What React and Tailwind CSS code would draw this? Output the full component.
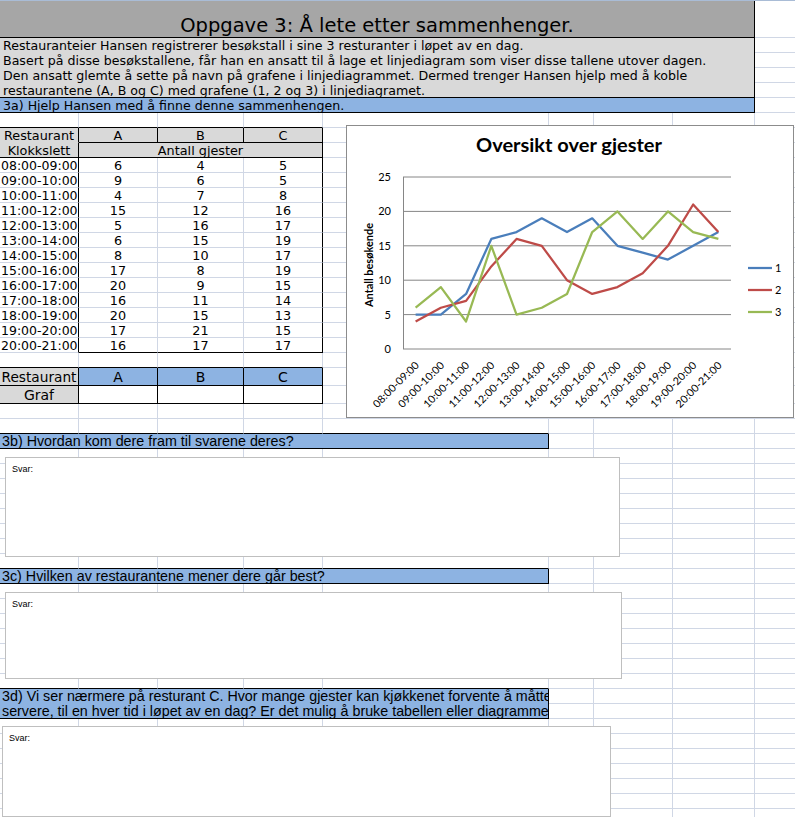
import React from 'react';
import clsx from 'clsx';

const COLS = ['w-[79px]', 'w-[79px]', 'w-[86px]', 'w-[79px]', 'w-[226px]', 'w-[45px]', 'w-[79px]', 'w-[82px]', 'w-[60px]'];

const dv = "font-['DejaVu_Sans',Verdana,sans-serif]";
const ls = "font-['Liberation_Sans',Arial,sans-serif]";

const times = ['08:00-09:00', '09:00-10:00', '10:00-11:00', '11:00-12:00', '12:00-13:00', '13:00-14:00', '14:00-15:00', '15:00-16:00', '16:00-17:00', '17:00-18:00', '18:00-19:00', '19:00-20:00', '20:00-21:00'];
const A = [6, 9, 4, 15, 5, 6, 8, 17, 20, 16, 20, 17, 16];
const B = [4, 6, 7, 12, 16, 15, 10, 8, 9, 11, 15, 21, 17];
const C = [5, 5, 8, 16, 17, 19, 17, 19, 15, 14, 13, 15, 17];

const series = [
    { name: '1', color: '#4a7ebb', data: C },
    { name: '2', color: '#be4b48', data: B },
    { name: '3', color: '#98b954', data: A },
];

// r / b: 'g' gridline, 'k' black, 'n' none
const Cell = ({ w, h = 'h-full', r = 'g', b = 'g', className, children }) => (
    <div
        className={clsx(
            'shrink-0 border-r border-b overflow-hidden whitespace-nowrap',
            w, h,
            r === 'k' ? 'border-r-black' : r === 'n' ? 'border-r-transparent' : 'border-r-[#d0d7e5]',
            b === 'k' ? 'border-b-black' : b === 'n' ? 'border-b-transparent' : 'border-b-[#d0d7e5]',
            className
        )}
    >
        {children}
    </div>
);

const Row = ({ h = 'h-[15px]', children }) => <div className={clsx('flex', h)}>{children}</div>;

const fill = (start, blackBottom = 0) =>
    COLS.slice(start).map((w, i) => <Cell key={'f' + (start + i)} w={w} b={start + i < blackBottom ? 'k' : 'g'} />);

const EmptyRow = ({ blackBottom = 0 }) => <Row>{fill(0, blackBottom)}</Row>;

const Chart = () => {
    const px = (i) => 56 + (i + 0.5) * 25.23;
    const py = (v) => 223 - v * 6.88;
    return (
        <div className="absolute left-[346px] top-[125px] w-[448px] h-[293px] border border-[#8c8c8c] bg-white">
            <svg width="446" height="291" viewBox="0 0 446 291" fontFamily="Lato, 'Open Sans', sans-serif">
                <text x="222" y="26" textAnchor="middle" fontSize="18" fontWeight="700" textLength="186" lengthAdjust="spacingAndGlyphs">
                    Oversikt over gjester
                </text>
                {[0, 5, 10, 15, 20, 25].map((v) => (
                    <g key={v}>
                        <line x1="56" x2="384" y1={py(v)} y2={py(v)} stroke="#868686" strokeWidth="1" />
                        <text x="44" y={py(v) + 4} textAnchor="end" fontSize="11" fill="#000">{v}</text>
                    </g>
                ))}
                <line x1="56.5" x2="56.5" y1="51" y2="223" stroke="#868686" strokeWidth="1" />
                <text
                    transform="translate(26 139) rotate(-90)"
                    textAnchor="middle"
                    fontSize="11"
                    fontWeight="700"
                    textLength="84"
                    lengthAdjust="spacingAndGlyphs"
                >
                    Antall besøkende
                </text>
                {times.map((t, i) => (
                    <text
                        key={t}
                        transform={`translate(${px(i) + 4} 240) rotate(-45)`}
                        textAnchor="end"
                        fontSize="10.5"
                        textLength="60"
                        lengthAdjust="spacingAndGlyphs"
                    >
                        {t}
                    </text>
                ))}
                {series.map((s) => (
                    <polyline
                        key={s.name}
                        points={s.data.map((v, i) => `${px(i)},${py(v)}`).join(' ')}
                        fill="none"
                        stroke={s.color}
                        strokeWidth="2.25"
                        strokeLinejoin="round"
                    />
                ))}
                {series.map((s, k) => (
                    <g key={'l' + s.name}>
                        <line x1="401" x2="425" y1={142 + k * 22} y2={142 + k * 22} stroke={s.color} strokeWidth="2.25" />
                        <text x="428" y={146 + k * 22} fontSize="11">{s.name}</text>
                    </g>
                ))}
            </svg>
        </div>
    );
};

const AnswerBox = ({ className }) => (
    <div className={clsx('absolute border border-[#bfbfbf] bg-white', className)}>
        <div className={clsx(ls, 'text-[9px] leading-[10px] pl-[6px] pt-[6px] text-black')}>Svar:</div>
    </div>
);

const App = () => {
    return (
        <div className="relative w-[795px] h-[817px] overflow-hidden bg-white text-black">
            <div className="h-px bg-[#a9bcd6]" />

            {/* title */}
            <Row h="h-[37px]">
                <Cell w="w-[755px]" r="k" b="k" className={clsx(dv, 'bg-[#a6a6a6] text-center text-[19.5px] leading-[22px] pt-[14px] overflow-visible')}>
                    Oppgave 3: Å lete etter sammenhenger.
                </Cell>
                {fill(8)}
            </Row>

            {/* description */}
            <div className="flex">
                <Cell w="w-[755px]" h="h-[60px]" r="k" b="k" className={clsx(dv, 'bg-[#d9d9d9] text-[12.6px] leading-[15px] pl-[3px]')}>
                    <div>Restauranteier Hansen registrerer besøkstall i sine 3 resturanter i løpet av en dag.</div>
                    <div>Basert på disse besøkstallene, får han en ansatt til å lage et linjediagram som viser disse tallene utover dagen.</div>
                    <div>Den ansatt glemte å sette på navn på grafene i linjediagrammet. Dermed trenger Hansen hjelp med å koble</div>
                    <div>restaurantene (A, B og C) med grafene (1, 2 og 3) i linjediagramet.</div>
                </Cell>
                <div className="flex flex-col">
                    {[0, 1, 2, 3].map((k) => (
                        <Row key={k}>{fill(8)}</Row>
                    ))}
                </div>
            </div>

            <Row>
                <Cell w="w-[755px]" r="k" b="k" className={clsx(dv, 'bg-[#8db3e2] text-[12.6px] leading-[15px] pl-[3px]')}>
                    3a) Hjelp Hansen med å finne denne sammenhengen.
                </Cell>
                {fill(8)}
            </Row>

            <EmptyRow blackBottom={4} />

            {/* data table */}
            <Row>
                <Cell w={COLS[0]} r="k" b="n" className={clsx(dv, 'bg-[#d9d9d9] text-[12.8px] leading-[15px] text-center')}>Restaurant</Cell>
                <Cell w={COLS[1]} r="k" b="k" className={clsx(dv, 'bg-[#d9d9d9] text-[12.8px] leading-[15px] text-center')}>A</Cell>
                <Cell w={COLS[2]} r="k" b="k" className={clsx(dv, 'bg-[#d9d9d9] text-[12.8px] leading-[15px] text-center')}>B</Cell>
                <Cell w={COLS[3]} r="k" b="k" className={clsx(dv, 'bg-[#d9d9d9] text-[12.8px] leading-[15px] text-center')}>C</Cell>
                {fill(4)}
            </Row>
            <Row>
                <Cell w={COLS[0]} r="k" b="k" className={clsx(dv, 'bg-[#d9d9d9] text-[12.8px] leading-[15px] text-center')}>Klokkslett</Cell>
                <Cell w="w-[244px]" r="k" b="k" className={clsx(dv, 'bg-[#d9d9d9] text-[12.8px] leading-[15px] text-center')}>Antall gjester</Cell>
                {fill(4)}
            </Row>
            {times.map((t, i) => {
                const last = i === times.length - 1;
                return (
                    <Row key={t}>
                        <Cell w={COLS[0]} r="k" className={clsx(dv, 'text-[12.5px] leading-[15px] pl-[1px]')}>{t}</Cell>
                        <Cell w={COLS[1]} b={last ? 'k' : 'g'} className={clsx(dv, 'text-[12.8px] leading-[15px] text-center')}>{A[i]}</Cell>
                        <Cell w={COLS[2]} b={last ? 'k' : 'g'} className={clsx(dv, 'text-[12.8px] leading-[15px] text-center')}>{B[i]}</Cell>
                        <Cell w={COLS[3]} r="k" b={last ? 'k' : 'g'} className={clsx(dv, 'text-[12.8px] leading-[15px] text-center')}>{C[i]}</Cell>
                        {fill(4)}
                    </Row>
                );
            })}

            <EmptyRow blackBottom={4} />

            {/* restaurant / graf */}
            <Row h="h-[18px]">
                <Cell w={COLS[0]} r="k" b="k" className={clsx(dv, 'bg-[#d9d9d9] text-[13.7px] leading-[18px] text-center')}>Restaurant</Cell>
                <Cell w={COLS[1]} r="k" b="k" className={clsx(dv, 'bg-[#8db3e2] text-[14px] leading-[18px] text-center')}>A</Cell>
                <Cell w={COLS[2]} r="k" b="k" className={clsx(dv, 'bg-[#8db3e2] text-[14px] leading-[18px] text-center')}>B</Cell>
                <Cell w={COLS[3]} r="k" b="k" className={clsx(dv, 'bg-[#8db3e2] text-[14px] leading-[18px] text-center')}>C</Cell>
                {fill(4)}
            </Row>
            <Row h="h-[18px]">
                <Cell w={COLS[0]} r="k" b="k" className={clsx(dv, 'bg-[#d9d9d9] text-[14px] leading-[18px] text-center')}>Graf</Cell>
                <Cell w={COLS[1]} r="k" b="k" />
                <Cell w={COLS[2]} r="k" b="k" />
                <Cell w={COLS[3]} r="k" b="k" />
                {fill(4)}
            </Row>

            <EmptyRow />
            <EmptyRow blackBottom={5} />

            {/* 3b */}
            <Row>
                <Cell w="w-[549px]" r="k" b="k" className={clsx(ls, 'bg-[#8db3e2] text-[14.3px] leading-[15px] pl-[2px]')}>
                    3b) Hvordan kom dere fram til svarene deres?
                </Cell>
                {fill(5)}
            </Row>
            {[0, 1, 2, 3, 4, 5, 6].map((k) => <EmptyRow key={'b' + k} />)}
            <EmptyRow blackBottom={5} />

            {/* 3c */}
            <Row>
                <Cell w="w-[549px]" r="k" b="k" className={clsx(ls, 'bg-[#8db3e2] text-[14.3px] leading-[15px] pl-[2px]')}>
                    3c) Hvilken av restaurantene mener dere går best?
                </Cell>
                {fill(5)}
            </Row>
            {[0, 1, 2, 3, 4, 5].map((k) => <EmptyRow key={'c' + k} />)}
            <EmptyRow blackBottom={5} />

            {/* 3d */}
            <div className="flex">
                <Cell w="w-[549px]" h="h-[30px]" r="k" b="k" className={clsx(ls, 'bg-[#8db3e2] text-[14.3px] leading-[15px] pl-[2px]')}>
                    <div>3d) Vi ser nærmere på resturant C. Hvor mange gjester kan kjøkkenet forvente å måtte</div>
                    <div>servere, til en hver tid i løpet av en dag? Er det mulig å bruke tabellen eller diagrammet?</div>
                </Cell>
                <div className="flex flex-col">
                    <Row>{fill(5)}</Row>
                    <Row>{fill(5)}</Row>
                </div>
            </div>
            {[0, 1, 2, 3, 4, 5, 6].map((k) => <EmptyRow key={'d' + k} />)}

            <Chart />
            <AnswerBox className="left-[5px] top-[457px] w-[615px] h-[100px]" />
            <AnswerBox className="left-[5px] top-[592px] w-[617px] h-[87px]" />
            <AnswerBox className="left-[2px] top-[726px] w-[609px] h-[91px]" />
        </div>
    );
};

export default App;
